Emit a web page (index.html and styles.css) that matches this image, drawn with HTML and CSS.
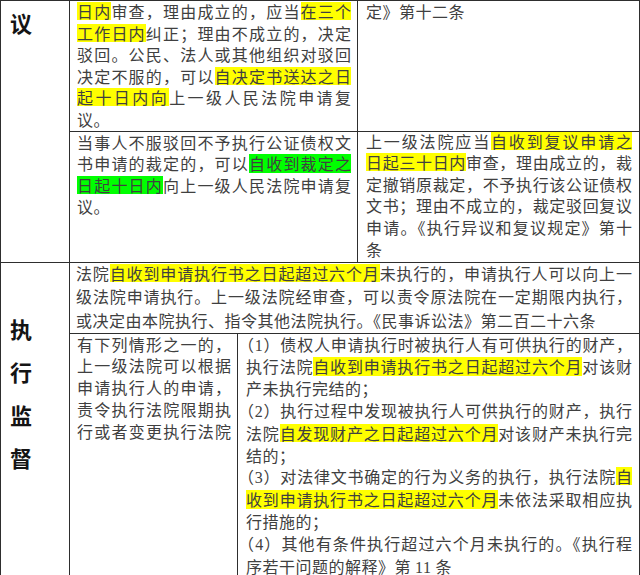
FILE: index.html
```html
<!DOCTYPE html>
<html lang="zh-CN">
<head>
<meta charset="utf-8">
<title>执行异议与执行监督</title>
<link rel="stylesheet" href="styles.css">
</head>
<body>
<table class="doc">
  <colgroup>
    <col class="col-a">
    <col class="col-b">
    <col class="col-c">
    <col class="col-d">
  </colgroup>
  <tr class="r1">
    <td class="lab lab-top" rowspan="2">议</td>
    <td class="pa" colspan="2">
      <div class="txt lh1">
        <div class="j"><mark>日内</mark>审查，理由成立的，应当<mark>在三个</mark><br><mark>工作日内</mark>纠正；理由不成立的，决定<br>驳回。公民、法人或其他组织对驳回<br>决定不服的，可以<mark>自决定书送达之日</mark><br><mark>起十日内向</mark>上一级人民法院申请复</div>
        <div class="tail">议。</div>
      </div>
    </td>
    <td class="pd">
      <div class="txt lh1">
        <div class="tail">定》第十二条</div>
      </div>
    </td>
  </tr>
  <tr class="r2">
    <td class="pa" colspan="2">
      <div class="txt lh1">
        <div class="j">当事人不服驳回不予执行公证债权文<br>书申请的裁定的，可以<mark class="g">自收到裁定之</mark><br><mark class="g">日起十日内</mark>向上一级人民法院申请复</div>
        <div class="tail">议。</div>
      </div>
    </td>
    <td class="pd">
      <div class="txt lh1 up1">
        <div class="j">上一级法院应当<mark>自收到复议申请之</mark><br><mark>日起三十日内</mark>审查，理由成立的，裁<br>定撤销原裁定，不予执行该公证债权<br>文书；理由不成立的，裁定驳回复议<br>申请。《执行异议和复议规定》第十</div>
        <div class="tail">条</div>
      </div>
    </td>
  </tr>
  <tr class="r3">
    <td class="lab lab-bottom" rowspan="2">执<br>行<br>监<br>督</td>
    <td class="pe" colspan="3">
      <div class="txt lh3 up1">
        <div class="j">法院<mark>自收到申请执行书之日起超过六个月</mark>未执行的，申请执行人可以向上一<br>级法院申请执行。上一级法院经审查，可以责令原法院在一定期限内执行，</div>
        <div class="tail">或决定由本院执行、指令其他法院执行。《民事诉讼法》第二百二十六条</div>
      </div>
    </td>
  </tr>
  <tr class="r4">
    <td class="pa">
      <div class="txt lh4">
        <div class="j">有下列情形之一的，<br>上一级法院可以根据<br>申请执行人的申请，<br>责令执行法院限期执<br>行或者变更执行法院</div>
      </div>
    </td>
    <td class="pd" colspan="2">
      <div class="txt lh4 trim">
        <div class="j">（<span class="num">1</span>）债权人申请执行时被执行人有可供执行的财产，<br>执行法院<mark>自收到申请执行书之日起超过六个月</mark>对该财</div>
        <div class="tail">产未执行完结的；</div>
        <div class="j">（<span class="num">2</span>）执行过程中发现被执行人可供执行的财产，执行<br>法院<mark>自发现财产之日起超过六个月</mark>对该财产未执行完</div>
        <div class="tail">结的；</div>
        <div class="j">（<span class="num">3</span>）对法律文书确定的行为义务的执行，执行法院<mark>自</mark><br><mark>收到申请执行书之日起超过六个月</mark>未依法采取相应执</div>
        <div class="tail">行措施的；</div>
        <div class="j">（<span class="num">4</span>）其他有条件执行超过六个月未执行的。《执行程</div>
        <div class="tail">序若干问题的解释》第 <span class="num">11</span> 条</div>
      </div>
    </td>
  </tr>
</table>
</body>
</html>
```

FILE: styles.css
```css
html, body {
  margin: 0;
  padding: 0;
  background: #ffffff;
}

.doc {
  border-collapse: collapse;
  table-layout: fixed;
  width: 639px;
  font-family: "Noto Sans CJK SC", "Noto Sans", sans-serif;
  font-size: 16px;
  color: #404040;
}

.col-a { width: 69px; }
.col-b { width: 168px; }
.col-c { width: 120px; }
.col-d { width: 282px; }

.r1 { height: 130px; }
.r2 { height: 131px; }
.r3 { height: 71px; }
.r4 { height: 241px; }

.doc td {
  border: 1px solid #2e2e2e;
  padding: 0;
  vertical-align: top;
}

.doc td.lab {
  font-size: 22px;
  font-weight: bold;
  color: #141414;
  padding-left: 9px;
}

.doc td.lab-top {
  padding-top: 8px;
  line-height: 26px;
}

.doc td.lab-bottom {
  padding-top: 44px;
  line-height: 43px;
}

.doc td.pa { padding: 0 6px 0 7px; }
.doc td.pd { padding: 0 7px 0 8px; }
.doc td.pe { padding: 0 7px 0 6px; }

.lh1 { line-height: 21.6px; }
.lh3 { line-height: 23.5px; }
.lh4 { line-height: 21.8px; }

.up1 { margin-top: -1px; }

.trim {
  text-spacing-trim: trim-start;
}

.j {
  text-align: justify;
  text-align-last: justify;
  white-space: nowrap;
}

.tail {
  text-align: left;
  letter-spacing: 0.5px;
  white-space: nowrap;
}

.num {
  font-family: "Liberation Serif", serif;
}

mark {
  color: inherit;
  background: linear-gradient(to bottom, transparent 3px, #ffff00 3px, #ffff00 21.5px, transparent 21.5px);
}

mark.g {
  background: linear-gradient(to bottom, transparent 3px, #00ff00 3px, #00ff00 21.5px, transparent 21.5px);
}
```
